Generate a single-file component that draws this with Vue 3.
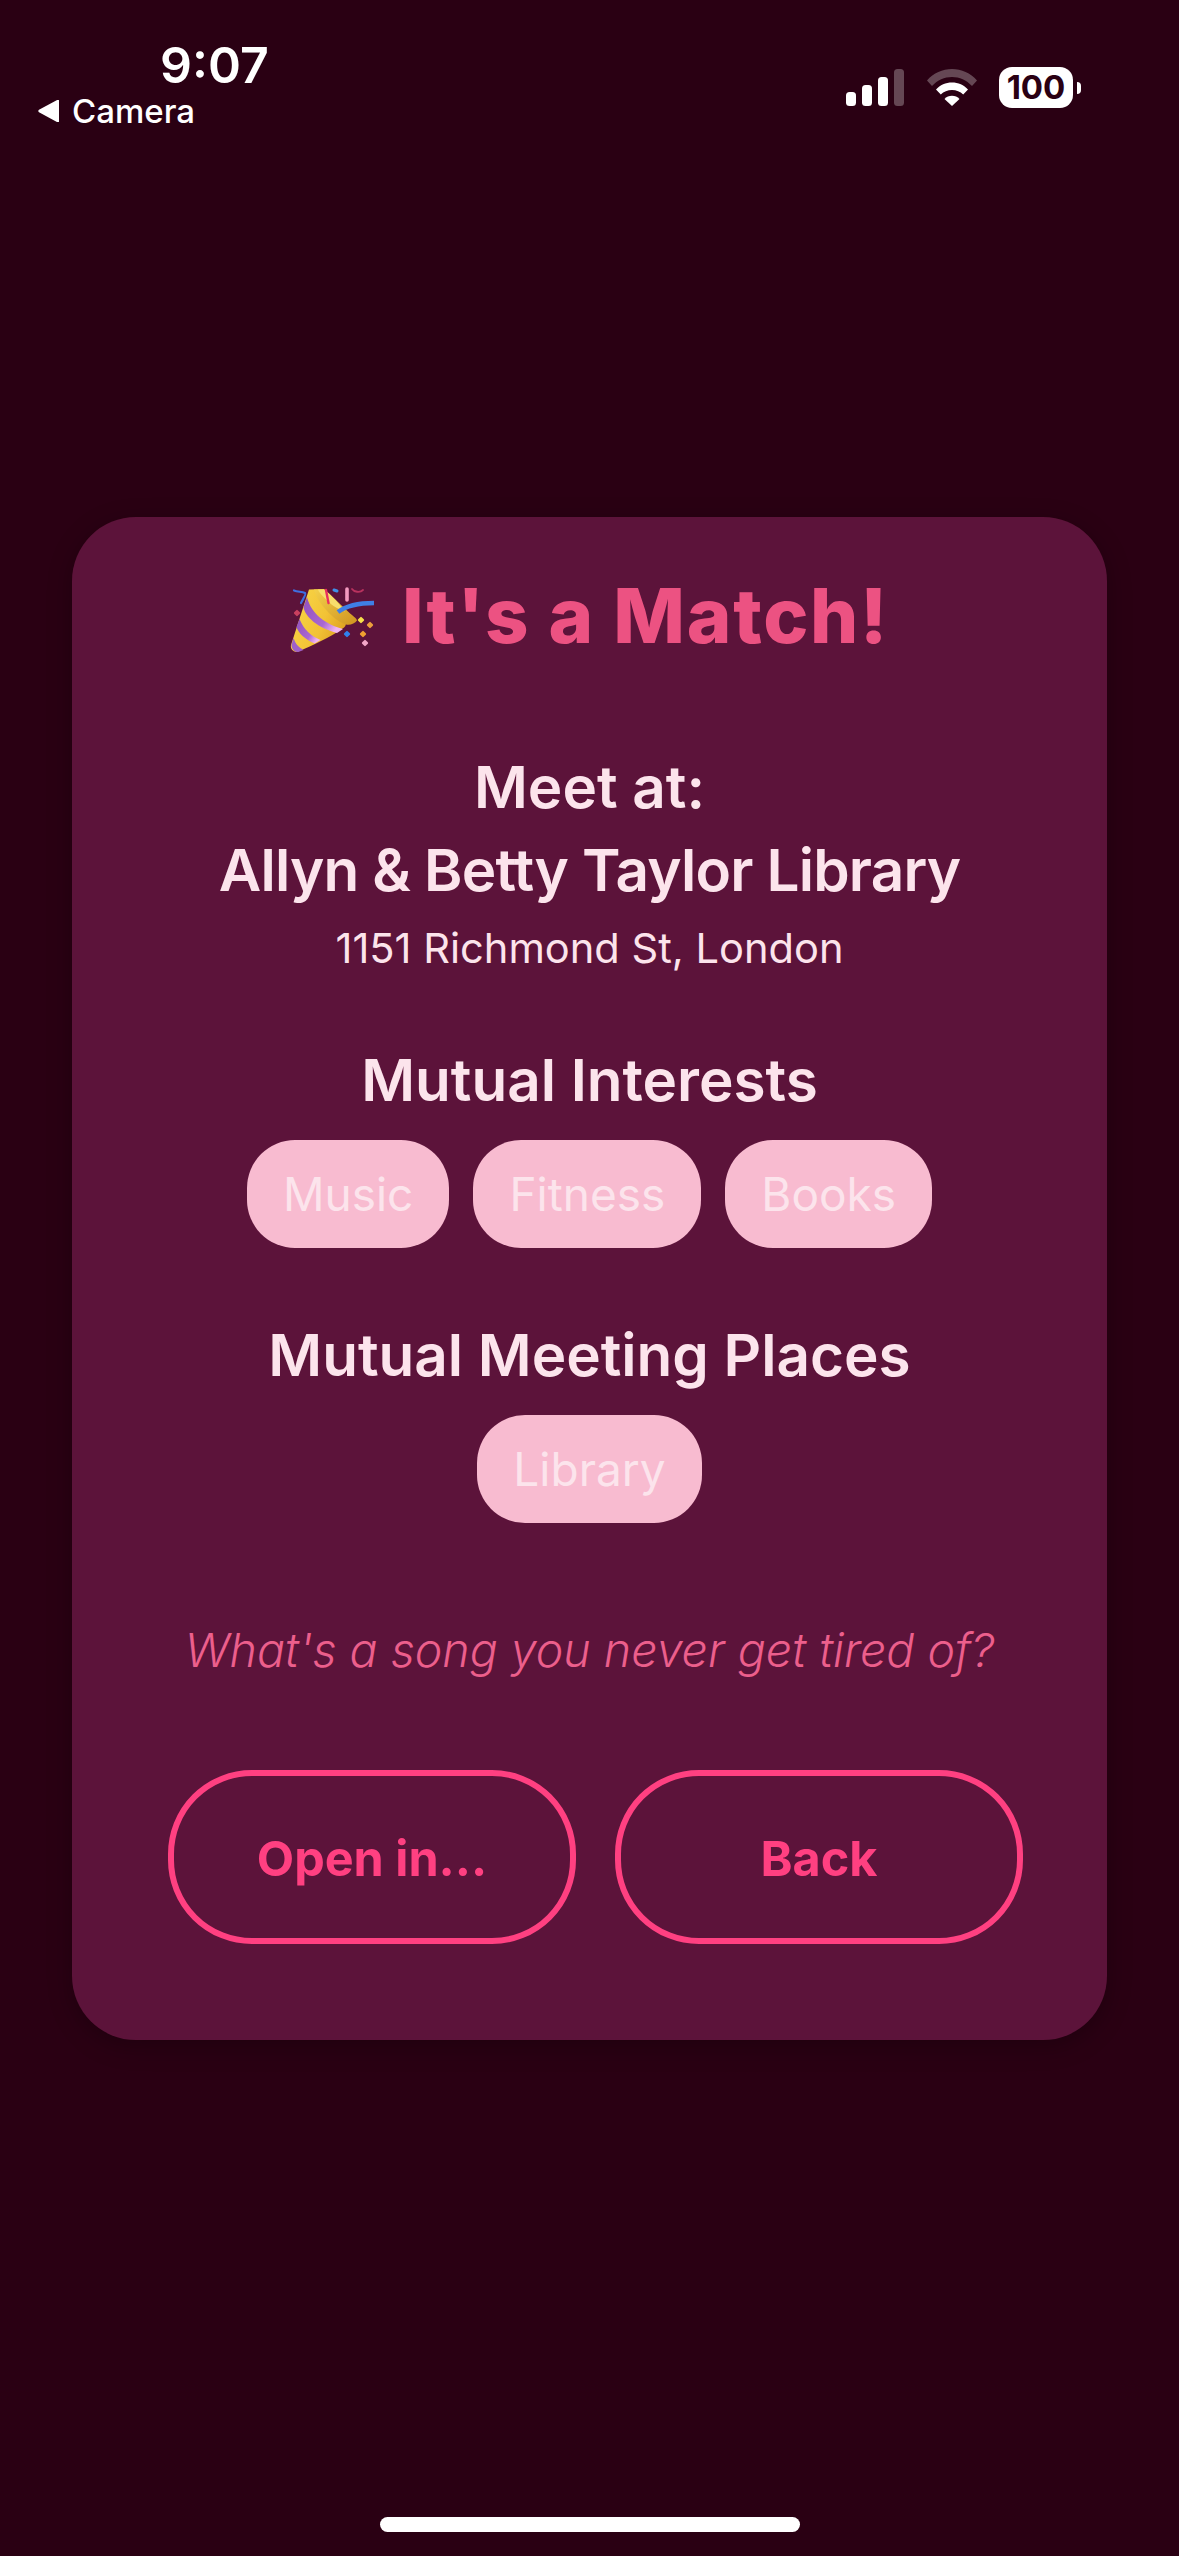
<template>
  <div class="page">
    <!-- Status bar -->
    <div class="status-bar">
      <div class="status-left">
        <span class="time">9:07</span>
        <span class="back-app">
          <svg class="back-arrow" viewBox="0 0 22 22" width="22" height="22"><path d="M21 0.5v21a1 1 0 0 1-1.5.8L1 12.2a1.4 1.4 0 0 1 0-2.4L19.5-.2A1 1 0 0 1 21 .5z" fill="#fff"/></svg>
          Camera
        </span>
      </div>
      <div class="status-right">
        <svg class="signal" viewBox="0 0 58 37" width="58" height="37">
          <rect x="0" y="23" width="10" height="14" rx="3.5" fill="#fff"/>
          <rect x="16" y="16" width="10" height="21" rx="3.5" fill="#fff"/>
          <rect x="32" y="8" width="10" height="29" rx="3.5" fill="#fff"/>
          <rect x="48" y="0" width="10" height="37" rx="3.5" fill="#fff" opacity="0.28"/>
        </svg>
        <svg class="wifi" viewBox="0 0 50 37" width="50" height="37">
          <path d="M0 11.5C6.500 4 15.500 0 25 0s18.500 4 25 11.500l-5 5.500C39.500 11 32.500 8 25 8S10.500 11 5 17z" fill="#fff" opacity="0.28"/>
          <path d="M9 20.500C13 16 18.800 13.500 25 13.500s12 2.500 16 7l-4.800 5C33.300 22.500 29.300 21 25 21s-8.300 1.500-11.200 4.500z" fill="#fff"/>
          <path d="M17.500 30C19.400 28 22.100 26.800 25 26.800s5.600 1.200 7.500 3.200L25 37z" fill="#fff"/>
        </svg>
        <div class="battery">
          <span class="battery-body">100</span>
          <span class="battery-cap"></span>
        </div>
      </div>
    </div>

    <div class="card">
      <h1 class="title">
        <svg class="popper" viewBox="0 0 84 64" width="84" height="64">
          <defs>
            <linearGradient id="cone" x1="0" y1="0.2" x2="1" y2="0.7">
              <stop offset="0" stop-color="#f8d648"/>
              <stop offset="0.6" stop-color="#f2c235"/>
              <stop offset="1" stop-color="#dc9e20"/>
            </linearGradient>
            <linearGradient id="band" x1="0" y1="0" x2="1" y2="0.6">
              <stop offset="0" stop-color="#9150bd"/>
              <stop offset="0.7" stop-color="#aa68d2"/>
              <stop offset="1" stop-color="#f0b4f2"/>
            </linearGradient>
            <linearGradient id="mouth" x1="0" y1="0" x2="1" y2="1">
              <stop offset="0" stop-color="#f4d04a"/>
              <stop offset="1" stop-color="#cf9420"/>
            </linearGradient>
          </defs>
          <!-- streamers behind the cone -->
          <path d="M4 1.500c4 1.500 8 1 11 2.500 1.500 1-2 6-4 10" fill="none" stroke="#3f6fe0" stroke-width="2.200" stroke-linecap="round"/>
          <path d="M44 1l3 1" stroke="#3f8fe8" stroke-width="3" stroke-linecap="round"/>
          <path d="M57 0v11" stroke="#f49ac0" stroke-width="3.600" stroke-linecap="round"/>
          <path d="M62 0c2 3 8 4 11 1" stroke="#b8325e" stroke-width="1.800" fill="none" stroke-linecap="round"/>
          <!-- cone -->
          <path d="M19 0.500L1 56c-1 4 3 8 7 6.500 14-6 32-14 46-24 4-3 1-9-4-18C44 11 39 4 34 0z" fill="url(#cone)"/>
          <path d="M17 8c3 13 14 26 36 32l-6 4C28 39 15 28 13.500 18z" fill="url(#band)"/>
          <path d="M9.500 30c4 10 11 17 21 21l-6 3.500C16 51 8 44 6.500 38z" fill="url(#band)"/>
          <path d="M3.500 49c2 6 5 9 10 12l-4.500 1.700C5 64 1.500 60 1.500 56z" fill="#9f60c8"/>
          <!-- mouth of the cone -->
          <path d="M24 0.500h10c8 6 15 14 24 22 4 4 9 7 9 9-2 3-7 5-11 4-8-2-17-11-22-17-5-6-9-13-10-18z" fill="url(#mouth)"/>
          <path d="M28 0.500h6c8 6 15 14 21 22-9-3-14-7-19-12-3-3-7-7-8-10z" fill="#f8de6c"/>
          <path d="M36 1l2.500 13" stroke="#e8305f" stroke-width="2.400" stroke-linecap="round"/>
          <!-- blue ribbon -->
          <path d="M48 23c8-6 20-9 36-9" fill="none" stroke="#3f7fe6" stroke-width="4.500"/>
          <!-- confetti -->
          <rect x="4.500" y="21.500" width="5" height="5" rx="1" fill="#c9405f" transform="rotate(45 7 24)"/>
          <rect x="68.500" y="28.500" width="5" height="5" rx="1" fill="#f7e04a" transform="rotate(45 71 31)"/>
          <rect x="77.500" y="33.500" width="5" height="5" rx="1" fill="#ec9f3c" transform="rotate(45 80 36)"/>
          <rect x="54.500" y="42.500" width="5" height="5" rx="1" fill="#2f80ed" transform="rotate(45 57 45)"/>
          <rect x="70.500" y="42.500" width="5" height="5" rx="1" fill="#f0a030" transform="rotate(45 73 45)"/>
          <rect x="72.500" y="51.500" width="5" height="5" rx="1" fill="#f3a6c8" transform="rotate(45 75 54)"/>
        </svg>
        <span>It's a Match!</span>
      </h1>

      <div class="place">
        <div class="heading">Meet at:</div>
        <div class="heading venue">Allyn &amp; Betty Taylor Library</div>
        <div class="address">1151 Richmond St, London</div>
      </div>

      <section class="group">
        <h2 class="heading">Mutual Interests</h2>
        <div class="chips">
          <span v-for="item in interests" :key="item" class="chip">{{ item }}</span>
        </div>
      </section>

      <section class="group">
        <h2 class="heading">Mutual Meeting Places</h2>
        <div class="chips">
          <span v-for="item in places" :key="item" class="chip">{{ item }}</span>
        </div>
      </section>

      <p class="prompt">What's a song you never get tired of?</p>

      <div class="actions">
        <button class="action">Open in...</button>
        <button class="action">Back</button>
      </div>
    </div>

    <div class="home-indicator"></div>
  </div>
</template>

<script setup>
const interests = ['Music', 'Fitness', 'Books']
const places = ['Library']
</script>

<style>
html, body {
  margin: 0;
  background: #2a0013;
}
</style>

<style scoped>
.page {
  position: relative;
  width: 1179px;
  height: 2556px;
  background: #2a0013;
  display: flex;
  align-items: center;
  justify-content: center;
  font-family: Inter, "Liberation Sans", sans-serif;
  overflow: hidden;
}

/* Status bar */
.status-bar {
  position: absolute;
  top: 0;
  left: 0;
  right: 0;
  height: 130px;
  color: #fff;
}

.status-left {
  position: absolute;
  left: 38px;
  top: 38px;
  display: flex;
  flex-direction: column;
}

.time {
  margin-left: 122px;
  font-size: 50px;
  line-height: 54px;
  font-weight: 600;
}

.back-app {
  display: flex;
  align-items: center;
  gap: 12px;
  font-size: 33px;
  line-height: 36px;
  font-weight: 500;
  margin-top: 1px;
}

.status-right {
  position: absolute;
  left: 846px;
  top: 67px;
  display: flex;
  align-items: flex-end;
}

.signal { margin-bottom: 2px; }
.wifi { margin-left: 23px; margin-bottom: 2px; }

.battery {
  display: flex;
  align-items: center;
  margin-left: 22px;
}

.battery-body {
  width: 74px;
  height: 41px;
  border-radius: 13px;
  background: #fff;
  color: #2a0013;
  font-size: 33px;
  font-weight: 700;
  line-height: 41px;
  text-align: center;
}

.battery-cap {
  width: 4px;
  height: 12px;
  margin-left: 4px;
  background: #fff;
  border-radius: 0 6px 6px 0;
}

/* Card */
.card {
  box-sizing: border-box;
  width: 1035px;
  height: 1523px;
  padding: 55px 84px 0;
  background: #5c133a;
  border-radius: 64px;
  box-shadow: 0 6px 24px rgba(0, 0, 0, 0.25);
  display: flex;
  flex-direction: column;
  align-items: center;
  text-align: center;
}

.title {
  display: flex;
  align-items: center;
  gap: 28px;
  margin: 0;
  font-size: 76px;
  line-height: 87px;
  font-weight: 800;
  letter-spacing: 1.700px;
  color: #ec5282;
}

.popper {
  overflow: visible;
  margin-top: 12px;
}

.place {
  margin-top: 86px;
}

.heading {
  margin: 0;
  font-size: 58.400px;
  line-height: 84px;
  font-weight: 600;
  color: #fce4ec;
}

.venue {
  margin-top: -1px;
  letter-spacing: -0.8px;
}

.address {
  margin-top: 5px;
  font-size: 41.600px;
  line-height: 62px;
  color: #fce4ec;
}

.group {
  margin-top: 59px;
}

.group + .group {
  margin-top: 65px;
}

.chips {
  display: flex;
  justify-content: center;
  gap: 24px;
  margin-top: 18px;
}

.chip {
  height: 108px;
  padding: 0 36px;
  border-radius: 48px;
  background: #f8bbd0;
  color: #fce4ec;
  font-size: 46px;
  line-height: 108px;
}

.prompt {
  margin: 97px 0 0;
  font-size: 46.500px;
  line-height: 60px;
  font-style: italic;
  font-weight: 300;
  color: #ec5f8c;
}

.actions {
  display: flex;
  gap: 39px;
  margin-top: 90px;
  margin-left: 12px;
}

.action {
  box-sizing: border-box;
  width: 408px;
  height: 174px;
  padding: 3px 0 0;
  background: transparent;
  border: 6px solid #ff4081;
  border-radius: 84px;
  color: #ff4081;
  font-family: inherit;
  font-size: 48.500px;
  font-weight: 700;
}

.home-indicator {
  position: absolute;
  left: 380px;
  bottom: 24px;
  width: 420px;
  height: 15px;
  border-radius: 8px;
  background: #fff;
}
</style>
